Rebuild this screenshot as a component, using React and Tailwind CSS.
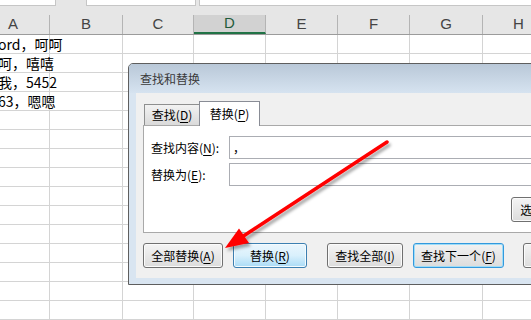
import React from 'react';

const cols = [
  { l: 'A', w: 'w-[73px]' },
  { l: 'B', w: 'w-[73px]' },
  { l: 'C', w: 'w-[71px]' },
  { l: 'D', w: 'w-[72px]', on: true },
  { l: 'E', w: 'w-[72px]' },
  { l: 'F', w: 'w-[72px]' },
  { l: 'G', w: 'w-[73px]' },
  { l: 'H', w: 'w-[72px]' },
];

// column A text, left part hidden behind the window edge
const cells = ['ord，呵呵', '呵，嘻嘻', '我，5452', '63，嗯嗯'];

const Key = ({ k }) => (
  <>
    (<span className="underline underline-offset-2">{k}</span>)
  </>
);

const btn = 'h-[25px] flex items-center justify-center rounded-[3px] border text-[12px] text-black shrink-0';
const plain = 'border-[#707070] bg-linear-to-b from-[#f4f4f4] to-[#dcdcdc] shadow-[inset_0_0_0_1px_#fbfbfb]';

const App = () => {
  return (
    <div className="relative w-[531px] h-[320px] overflow-hidden bg-white font-['Noto_Sans_CJK_SC','Noto_Sans',sans-serif]">
      {/* ── toolbar strip ── */}
      <div className="h-[15px] bg-[#e6e6e6] flex items-start">
        <div className="w-[56px] h-[6px] bg-white border-r border-b border-[#c6c6c6]" />
        <div className="ml-[30px] w-[110px] h-[6px] bg-white border-x border-b border-[#c6c6c6]" />
        <div className="ml-[3px] flex-1 h-[6px] bg-white border-l border-b border-[#c6c6c6]" />
      </div>

      {/* ── column headers ── */}
      <div className="flex h-[20px] -ml-[23px] bg-[#e6e6e6] border-b border-[#9b9b9b]">
        {cols.map((c) => (
          <div
            key={c.l}
            className={`${c.w} shrink-0 h-full flex items-center justify-center border-r border-[#b4b4b4] font-['Liberation_Sans',sans-serif] text-[15px] ${
              c.on ? 'bg-[#d2d2d2] text-[#1f5c3b] border-b-2 border-b-[#217346]' : 'text-[#444]'
            }`}
          >
            {c.l}
          </div>
        ))}
      </div>

      {/* ── rows ── */}
      {Array.from({ length: 15 }).map((_, r) => (
        <div key={r} className="flex h-[19px] -ml-[23px] border-b border-[#d4d4d4]">
          {cols.map((c, i) => (
            <div key={c.l} className={`${c.w} shrink-0 h-full border-r border-[#d4d4d4] relative`}>
              {i === 0 && r < 4 && (
                <span className="absolute left-[21px] top-0 h-full flex items-center whitespace-nowrap text-[14px] text-black z-10">
                  {cells[r]}
                </span>
              )}
            </div>
          ))}
        </div>
      ))}

      {/* ── Find & Replace dialog ── */}
      <div className="absolute left-[128px] top-[63px] w-[480px] h-[222px] border border-[#5e5e5e] rounded-t-[5px] bg-[#d9e5f1] flex flex-col">
        <div className="h-[29px] shrink-0 rounded-t-[4px] bg-linear-to-b from-[#b9c8d8] to-[#d6e3f0] flex items-center pl-[11px] text-[12px] text-[#3a3a3a]">
          查找和替换
        </div>
        <div className="mx-[7px] h-[185px] bg-[#f0f0f0] px-[7px] pt-[8px]">
          {/* tabs */}
          <div className="flex items-end h-[24px]">
            <div className="ml-[1px] w-[56px] h-[21px] border border-b-0 border-[#8e8f8f] bg-linear-to-b from-[#f2f2f2] to-[#dadada] flex items-center justify-center text-[12px] text-black">
              查找<Key k="D" />
            </div>
            <div className="-ml-px w-[61px] h-[25px] -mb-px relative z-10 border border-b-0 border-[#898c95] bg-white flex items-center justify-center text-[12px] text-black">
              替换<Key k="P" />
            </div>
          </div>

          {/* panel */}
          <div className="h-[108px] border border-[#a9a9a9] bg-white px-[7px] pt-[10px]">
            <div className="flex items-center h-[23px]">
              <div className="w-[78px] text-[12px] text-black whitespace-nowrap">
                查找内容<Key k="N" />:
              </div>
              <div className="flex-1 h-full border border-[#abadb3] flex items-center pl-[3px] text-[12px] text-black">，</div>
            </div>
            <div className="flex items-center h-[23px] mt-[4px]">
              <div className="w-[78px] text-[12px] text-black whitespace-nowrap">
                替换为<Key k="E" />:
              </div>
              <div className="flex-1 h-full border border-[#abadb3]" />
            </div>
            <div className="flex justify-end mt-[11px]">
              <div className={`${btn} ${plain} w-[74px]`}>
                选项<Key k="T" /> &gt;&gt;
              </div>
            </div>
          </div>

          {/* buttons */}
          <div className="flex mt-[10px]">
            <div className={`${btn} ${plain} w-[80px]`}>
              全部替换<Key k="A" />
            </div>
            <div className={`${btn} ml-[10px] w-[74px] border-[#3c7fb1] bg-linear-to-b from-[#eaf6fd] via-[#d9f0fc] to-[#a9dbf6] shadow-[inset_0_0_0_1px_#f4fbfe]`}>
              替换<Key k="R" />
            </div>
            <div className={`${btn} ${plain} ml-[20px] w-[76px]`}>
              查找全部<Key k="I" />
            </div>
            <div className={`${btn} ml-[10px] w-[91px] border-[#3399dd] bg-linear-to-b from-[#f2f2f2] to-[#dcdcdc] shadow-[inset_0_0_0_1px_#9fdcf7]`}>
              查找下一个<Key k="F" />
            </div>
            <div className={`${btn} ${plain} ml-[19px] w-[74px]`}>关闭</div>
          </div>
        </div>
      </div>

      {/* ── red annotation arrow ── */}
      <svg className="absolute inset-0 pointer-events-none" width="531" height="320" viewBox="0 0 531 320">
        <defs>
          <filter id="sh" x="-20%" y="-20%" width="140%" height="140%">
            <feDropShadow dx="2" dy="3" stdDeviation="1.5" floodColor="#000" floodOpacity="0.35" />
          </filter>
        </defs>
        <g filter="url(#sh)">
          <line x1="387" y1="142" x2="242" y2="237" stroke="#ff0000" strokeWidth="3.5" strokeLinecap="round" />
          <polygon points="225,248 239,228.5 249,243" fill="#ff0000" />
        </g>
      </svg>
    </div>
  );
};

export default App;
